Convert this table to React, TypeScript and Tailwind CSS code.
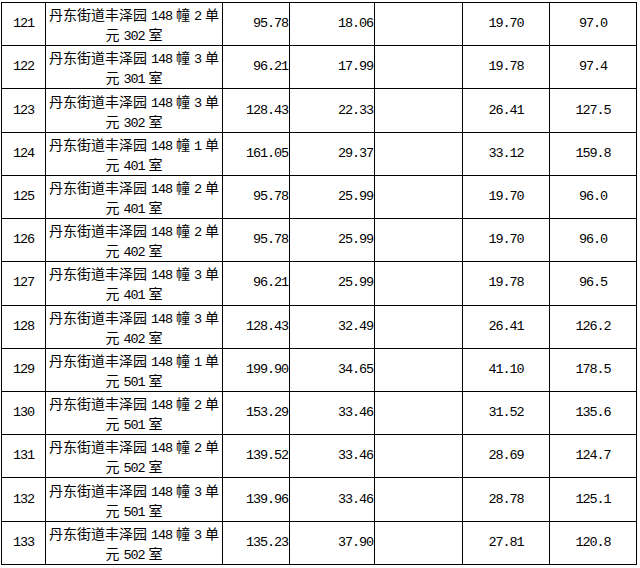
import React from "react";

type Row = [string, string, string, string, string, string, string];

const rows: Row[] = [
  ["121", "2", "302", "95.78", "18.06", "19.70", "97.0"],
  ["122", "3", "301", "96.21", "17.99", "19.78", "97.4"],
  ["123", "3", "302", "128.43", "22.33", "26.41", "127.5"],
  ["124", "1", "401", "161.05", "29.37", "33.12", "159.8"],
  ["125", "2", "401", "95.78", "25.99", "19.70", "96.0"],
  ["126", "2", "402", "95.78", "25.99", "19.70", "96.0"],
  ["127", "3", "401", "96.21", "25.99", "19.78", "96.5"],
  ["128", "3", "402", "128.43", "32.49", "26.41", "126.2"],
  ["129", "1", "501", "199.90", "34.65", "41.10", "178.5"],
  ["130", "2", "501", "153.29", "33.46", "31.52", "135.6"],
  ["131", "2", "502", "139.52", "33.46", "28.69", "124.7"],
  ["132", "3", "501", "139.96", "33.46", "28.78", "125.1"],
  ["133", "3", "502", "135.23", "37.90", "27.81", "120.8"],
];

const cjk = "font-['Noto_Sans_CJK_SC',sans-serif] text-[14px] leading-[20px]";

function Num({ children }: { children: React.ReactNode }) {
  return (
    <span className="font-['Liberation_Mono',monospace] text-[13.5px] tracking-[-1.1px] leading-[20px]">
      {children}
    </span>
  );
}

const cell = "border-r border-b border-black flex items-center";

export default function App() {
  return (
    <div className="w-[640px] h-[568px] bg-white text-black overflow-hidden">
      <div className="pt-[2px] pl-[1px]">
        <div className="grid grid-cols-[44px_177px_67px_85px_88px_87px_87px] auto-rows-[43.23px] border-l border-t border-black w-[636px]">
          {rows.map((r) => (
            <React.Fragment key={r[0]}>
              <div className={`${cell} justify-center`}>
                <Num>{r[0]}</Num>
              </div>
              <div className={`${cell} justify-center`}>
                <div className={`${cjk} flex flex-col items-center`}>
                  <div className="flex h-[20px] items-baseline whitespace-nowrap gap-[4px]">
                    <span>丹东街道丰泽园</span>
                    <Num>148</Num>
                    <span>幢</span>
                    <Num>{r[1]}</Num>
                    <span>单</span>
                  </div>
                  <div className="flex h-[20px] items-baseline whitespace-nowrap gap-[4px]">
                    <span>元</span>
                    <Num>{r[2]}</Num>
                    <span>室</span>
                  </div>
                </div>
              </div>
              <div className={`${cell} justify-end pr-[1px]`}>
                <Num>{r[3]}</Num>
              </div>
              <div className={`${cell} justify-end pr-[1px]`}>
                <Num>{r[4]}</Num>
              </div>
              <div className={cell}></div>
              <div className={`${cell} justify-center`}>
                <Num>{r[5]}</Num>
              </div>
              <div className={`${cell} justify-center`}>
                <Num>{r[6]}</Num>
              </div>
            </React.Fragment>
          ))}
        </div>
      </div>
    </div>
  );
}
